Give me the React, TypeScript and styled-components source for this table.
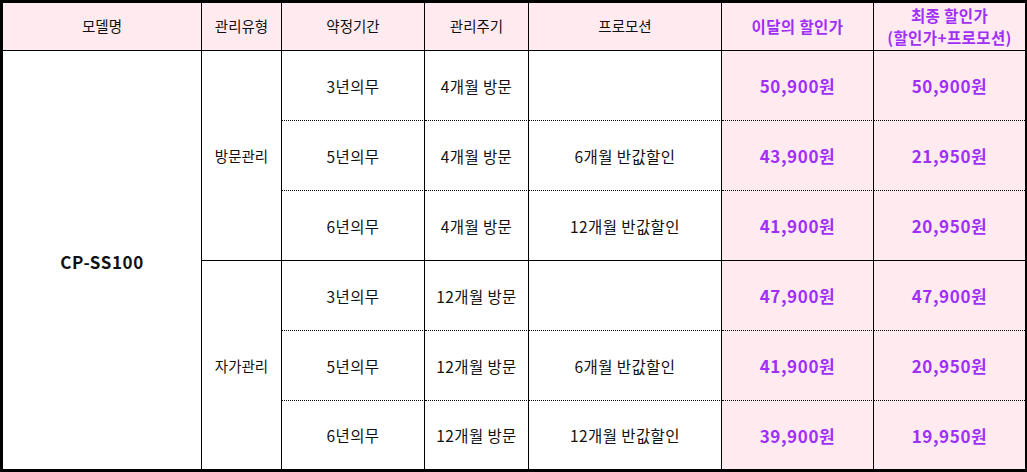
import React from "react";
import styled, { createGlobalStyle } from "styled-components";

const GlobalStyle = createGlobalStyle`
  html, body {
    margin: 0;
    padding: 0;
    background: #ffffff;
  }
  body {
    font-family: "Noto Sans CJK KR", "Noto Sans", sans-serif;
  }
`;

type Plan = {
  term: string;
  cycle: string;
  promo: string;
  price: string;
  final: string;
};

const groups: { type: string; plans: Plan[] }[] = [
  {
    type: "방문관리",
    plans: [
      { term: "3년의무", cycle: "4개월 방문", promo: "", price: "50,900원", final: "50,900원" },
      { term: "5년의무", cycle: "4개월 방문", promo: "6개월 반값할인", price: "43,900원", final: "21,950원" },
      { term: "6년의무", cycle: "4개월 방문", promo: "12개월 반값할인", price: "41,900원", final: "20,950원" },
    ],
  },
  {
    type: "자가관리",
    plans: [
      { term: "3년의무", cycle: "12개월 방문", promo: "", price: "47,900원", final: "47,900원" },
      { term: "5년의무", cycle: "12개월 방문", promo: "6개월 반값할인", price: "41,900원", final: "20,950원" },
      { term: "6년의무", cycle: "12개월 방문", promo: "12개월 반값할인", price: "39,900원", final: "19,950원" },
    ],
  },
];

const App = () => {
  return (
    <>
      <GlobalStyle />
      <Frame>
        <Grid>
          <HeadCell>모델명</HeadCell>
          <HeadCell>관리유형</HeadCell>
          <HeadCell>약정기간</HeadCell>
          <HeadCell>관리주기</HeadCell>
          <HeadCell>프로모션</HeadCell>
          <HeadCell $accent>이달의 할인가</HeadCell>
          <HeadCell $accent $last>
            최종 할인가
            <br />
            (할인가+프로모션)
          </HeadCell>

          <ModelCell>CP-SS100</ModelCell>

          {groups.map((g, gi) => (
            <React.Fragment key={g.type}>
              <TypeCell $row={gi * 3 + 2} $divider={gi === 0}>
                {g.type}
              </TypeCell>
              {g.plans.map((p, pi) => {
                const idx = gi * 3 + pi;
                const line = idx === 5 ? "none" : idx === 2 ? "solid" : "dotted";
                return (
                  <React.Fragment key={idx}>
                    <Cell $line={line}>{p.term}</Cell>
                    <Cell $line={line}>{p.cycle}</Cell>
                    <Cell $line={line}>{p.promo}</Cell>
                    <PriceCell $line={line}>{p.price}</PriceCell>
                    <PriceCell $line={line} $last>
                      {p.final}
                    </PriceCell>
                  </React.Fragment>
                );
              })}
            </React.Fragment>
          ))}
        </Grid>
      </Frame>
    </>
  );
};

export default App;

const Frame = styled.div`
  width: 1027px;
  height: 472px;
  box-sizing: border-box;
  border: 3px solid #000;
  border-right-width: 2px;
  background: #fff;
`;

const Grid = styled.div`
  display: grid;
  grid-template-columns: 199px 80px 143px 104px 193px 152px 151px;
  grid-template-rows: 48px 70px 70px 70px 70px 70px 68px;
  width: 1022px;
  height: 466px;
`;

const Base = styled.div`
  box-sizing: border-box;
  display: flex;
  align-items: center;
  justify-content: center;
  text-align: center;
  font-size: 15.5px;
  letter-spacing: 0.4px;
  color: #111;
  white-space: nowrap;
`;

const HeadCell = styled(Base)<{ $accent?: boolean; $last?: boolean }>`
  background: #ffebef;
  border-bottom: 1px solid #000;
  border-right: ${(p) => (p.$last ? "none" : "1px solid #000")};
  color: ${(p) => (p.$accent ? "#a030f8" : "#111")};
  font-weight: ${(p) => (p.$accent ? 700 : 400)};
  font-size: ${(p) => (p.$accent ? "15.5px" : "14.5px")};
  letter-spacing: ${(p) => (p.$accent ? "0.4px" : "0")};
  line-height: 22px;
  padding-bottom: 2px;
`;

const ModelCell = styled(Base)`
  grid-column: 1;
  grid-row: 2 / span 6;
  border-right: 1px solid #000;
  font-weight: 700;
  font-size: 17px;
  letter-spacing: 0.6px;
  padding-top: 2px;
`;

const TypeCell = styled(Base)<{ $row: number; $divider: boolean }>`
  grid-column: 2;
  grid-row: ${(p) => p.$row} / span 3;
  border-right: 1px solid #000;
  border-bottom: ${(p) => (p.$divider ? "1px solid #000" : "none")};
  letter-spacing: 0;
  font-size: 14.5px;
`;

const Cell = styled(Base)<{ $line: string }>`
  border-right: 1px solid #000;
  border-bottom: ${(p) => (p.$line === "none" ? "none" : `1px ${p.$line} #000`)};
`;

const PriceCell = styled(Cell)<{ $last?: boolean }>`
  background: #ffebef;
  color: #a030f8;
  font-weight: 700;
  font-size: 17px;
  letter-spacing: 0.6px;
  border-right: ${(p) => (p.$last ? "none" : "1px solid #000")};
`;
